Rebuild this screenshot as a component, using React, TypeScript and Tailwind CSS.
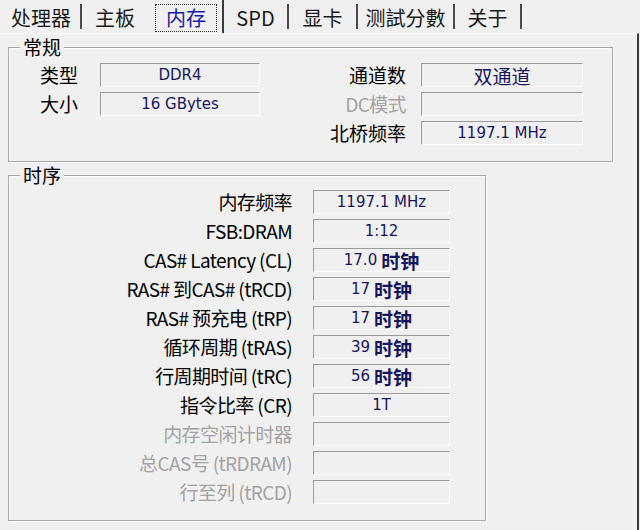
const labelFont = { fontFamily: '"Noto Sans CJK SC", "Noto Sans", sans-serif' };
const valueFont = { fontFamily: '"DejaVu Sans", "Noto Sans CJK SC", sans-serif' };

type Tab = { name: string; width: number; sep: "short" | "tall" | "none" };

const tabs: Tab[] = [
  { name: "处理器", width: 78, sep: "short" },
  { name: "主板", width: 66, sep: "none" },
  { name: "内存", width: 72, sep: "tall" },
  { name: "SPD", width: 63, sep: "short" },
  { name: "显卡", width: 67, sep: "short" },
  { name: "测試分數", width: 95, sep: "short" },
  { name: "关于", width: 65, sep: "short" },
];

const timings: { label: string; value: string; clocks?: boolean; disabled?: boolean }[] = [
  { label: "内存频率", value: "1197.1 MHz" },
  { label: "FSB:DRAM", value: "1:12" },
  { label: "CAS# Latency (CL)", value: "17.0", clocks: true },
  { label: "RAS# 到CAS# (tRCD)", value: "17", clocks: true },
  { label: "RAS# 预充电 (tRP)", value: "17", clocks: true },
  { label: "循环周期 (tRAS)", value: "39", clocks: true },
  { label: "行周期时间 (tRC)", value: "56", clocks: true },
  { label: "指令比率 (CR)", value: "1T" },
  { label: "内存空闲计时器", value: "", disabled: true },
  { label: "总CAS号 (tRDRAM)", value: "", disabled: true },
  { label: "行至列 (tRCD)", value: "", disabled: true },
];

function Field({ children, width }: { children?: React.ReactNode; width: string }) {
  return (
    <div
      className={`${width} h-[24px] shrink-0 border-t border-l border-[#9c9c9c] border-r border-b border-r-white border-b-white bg-[#f0f0f0] flex items-center justify-center text-[15px] text-[#16165e] whitespace-nowrap`}
      style={valueFont}
    >
      {children}
    </div>
  );
}

function Clocks({ n }: { n: string }) {
  return (
    <>
      <span>{n}</span>
      <span className="ml-[4px] text-[19px] font-bold leading-none" style={labelFont}>
        时钟
      </span>
    </>
  );
}

function Group({ title, className, children }: { title: string; className: string; children: React.ReactNode }) {
  return (
    <div
      className={`relative border border-[#a6a6a6] shadow-[inset_1px_1px_0_#ffffff,1px_1px_0_#ffffff] ${className}`}
    >
      <span
        className="absolute left-[11px] top-[-13px] px-[3px] bg-[#f0f0f0] text-[19px] leading-[24px] text-black"
        style={labelFont}
      >
        {title}
      </span>
      {children}
    </div>
  );
}

export default function App() {
  return (
    <div className="w-[640px] h-[530px] bg-[#f0f0f0] flex flex-col overflow-hidden" style={labelFont}>
      {/* tab strip */}
      <div className="h-[33px] flex items-start shrink-0">
        <div className="w-[2px]" />
        {tabs.map((t) => (
          <div key={t.name} className="flex items-start">
            <div
              className="h-[33px] pt-[3px] flex items-center justify-center text-[20px] leading-none"
              style={{ width: t.width }}
            >
              {t.name === "内存" ? (
                <span className="px-[10px] h-[28px] flex items-center border border-dotted border-[#333] text-[#1a1aa8]">
                  {t.name}
                </span>
              ) : (
                <span className="text-[#1a1a1a]">{t.name}</span>
              )}
            </div>
            {t.sep === "short" && <div className="w-[2px] h-[25px] mt-[4px] bg-[#4a4a4a]" />}
            {t.sep === "tall" && <div className="w-[2px] h-[33px] bg-[#3a3a3a]" />}
            {t.sep === "none" && <div className="w-[2px]" />}
          </div>
        ))}
      </div>

      {/* tab panel */}
      <div className="flex-1 border-t border-white border-r-2 border-r-[#3c3c3c] mr-[1px] pt-[13px] pl-[8px]">
        <Group title="常规" className="w-[605px] h-[115px] pt-[15px] flex flex-col gap-[5px]">
          <div className="flex items-center">
            <span className="w-[91px] pl-[31px] text-[19px] leading-[24px]">类型</span>
            <Field width="w-[160px]">DDR4</Field>
            <span className="w-[161px] pr-[15px] text-right text-[19px] leading-[24px]">通道数</span>
            <Field width="w-[162px]">
              <span className="text-[19px] leading-none" style={labelFont}>
                双通道
              </span>
            </Field>
          </div>
          <div className="flex items-center">
            <span className="w-[91px] pl-[31px] text-[19px] leading-[24px]">大小</span>
            <Field width="w-[160px]">16 GBytes</Field>
            <span className="w-[161px] pr-[15px] text-right text-[19px] leading-[24px] tracking-[-0.6px] text-[#a3a3a3]">
              DC模式
            </span>
            <Field width="w-[162px]" />
          </div>
          <div className="flex items-center">
            <span className="w-[91px]" />
            <span className="w-[160px]" />
            <span className="w-[161px] pr-[15px] text-right text-[19px] leading-[24px]">北桥频率</span>
            <Field width="w-[162px]">1197.1 MHz</Field>
          </div>
        </Group>

        <Group title="时序" className="mt-[13px] w-[478px] h-[346px] pt-[14px] flex flex-col gap-[5px]">
          {timings.map((r) => (
            <div key={r.label} className="flex items-center">
              <span
                className={`w-[304px] pr-[21px] text-right text-[19px] leading-[24px] tracking-[-0.6px] whitespace-nowrap ${
                  r.disabled ? "text-[#a3a3a3]" : "text-black"
                }`}
              >
                {r.label}
              </span>
              <Field width="w-[137px]">{r.clocks ? <Clocks n={r.value} /> : r.value}</Field>
            </div>
          ))}
        </Group>
      </div>
    </div>
  );
}
